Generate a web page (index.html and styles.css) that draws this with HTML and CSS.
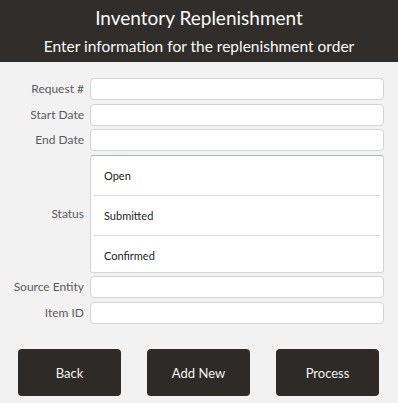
FILE: index.html
```html
<!DOCTYPE html>
<html>
<head>
<meta charset="utf-8">
<link rel="stylesheet" href="styles.css">
</head>
<body>
<div class="header">
  <div class="title">Inventory Replenishment</div>
  <div class="subtitle">Enter information for the replenishment order</div>
</div>
<div class="form">
  <div class="row"><label>Request #</label><div class="input"></div></div>
  <div class="row"><label>Start Date</label><div class="input"></div></div>
  <div class="row"><label>End Date</label><div class="input"></div></div>
  <div class="row"><label>Status</label>
    <div class="list">
      <div class="opt">Open</div>
      <div class="opt">Submitted</div>
      <div class="opt">Confirmed</div>
    </div>
  </div>
  <div class="row"><label>Source Entity</label><div class="input"></div></div>
  <div class="row"><label>Item ID</label><div class="input"></div></div>
</div>
<div class="buttons">
  <div class="btn">Back</div>
  <div class="btn">Add New</div>
  <div class="btn">Process</div>
</div>
</body>
</html>
```
FILE: styles.css
```css
html, body {
  margin: 0;
  padding: 0;
  background: #f2f2f2;
  font-family: Lato, "Open Sans", sans-serif;
  width: 398px;
  height: 403px;
  overflow: hidden;
}
.header {
  background: #312d2a;
  color: #fafafa;
  height: 62px;
  display: flex;
  flex-direction: column;
  align-items: center;
}
.title {
  font-size: 19px;
  line-height: 22px;
  margin-top: 7px;
}
.subtitle {
  font-size: 15.5px;
  line-height: 20px;
  margin-top: 7px;
}
.form {
  display: flex;
  flex-direction: column;
  gap: 3.5px;
  padding: 16px 14px 0 0;
}
.row {
  display: grid;
  grid-template-columns: 84px 1fr;
  column-gap: 6px;
  align-items: center;
}
.row label {
  text-align: right;
  font-size: 12px;
  line-height: 14px;
  color: #5b5b5b;
}
.input {
  height: 20px;
  background: #fff;
  border: 1px solid #d3d3d3;
  border-radius: 4px;
}
.list {
  height: 116px;
  background: #fff;
  border: 1px solid #d3d3d3;
  border-top-color: #a9b6b2;
  border-radius: 3px;
  padding: 0 3px;
  overflow: hidden;
}
.opt {
  flex: none;
  height: 39px;
  display: flex;
  align-items: center;
  padding-left: 10px;
  font-size: 11px;
  color: #222;
  border-bottom: 1px solid #d9d9d9;
}
.opt:last-child {
  border-bottom: none;
}
.buttons {
  display: flex;
  gap: 26px;
  padding: 25.5px 0 0 18px;
}
.btn {
  width: 103px;
  height: 47px;
  background: #2e2a27;
  border-radius: 4px;
  color: #f2f2f2;
  font-size: 13px;
  display: flex;
  align-items: center;
  justify-content: center;
}
```
